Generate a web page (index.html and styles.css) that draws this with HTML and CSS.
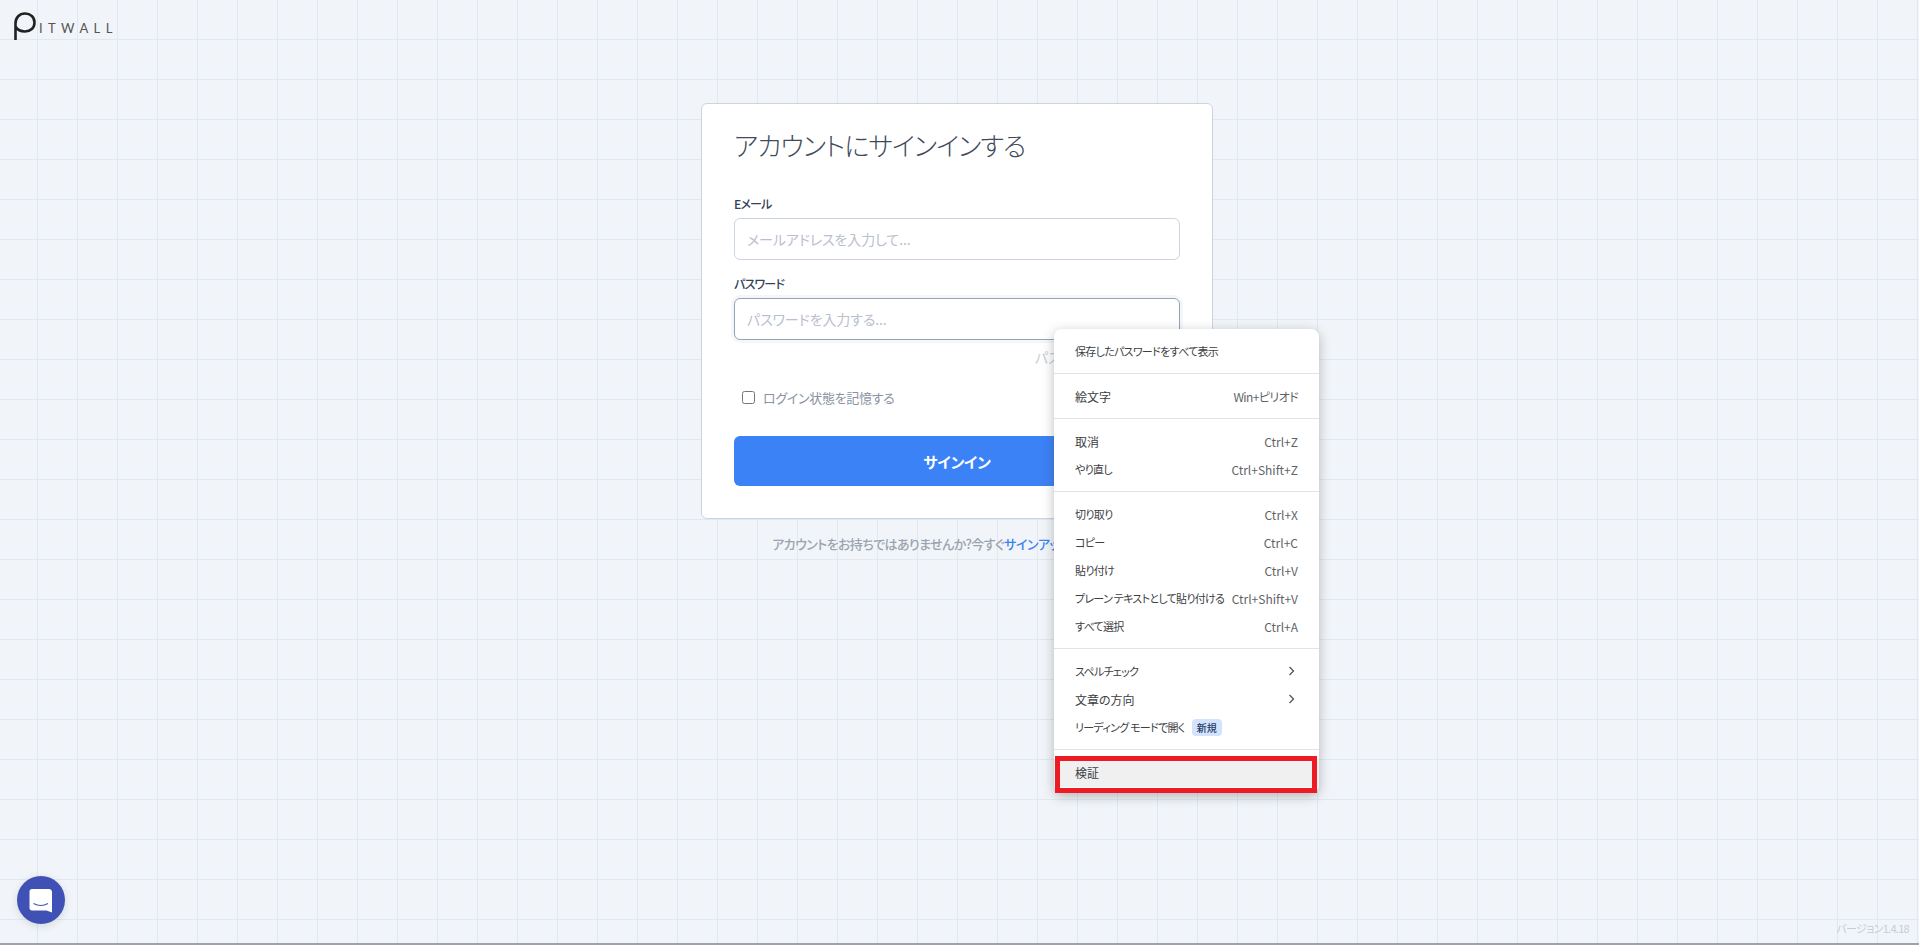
FILE: index.html
```html
<!DOCTYPE html>
<html lang="ja">
<head>
    <meta charset="UTF-8">
    <title>PITWALL</title>
    <link rel="stylesheet" href="styles.css">
</head>
<body>
    <div class="page">
        <header class="logo">
            <svg class="logo-mark" width="24" height="29" viewBox="0 0 24 29">
                <path d="M2.500 28V11.500C2.500 5.500 6.500 1.500 12 1.500C17.500 1.500 21.500 5 21.500 10.500C21.500 16 17.500 19.500 12 19.500C8 19.500 4.500 18 2.500 14.500" fill="none" stroke="#222" stroke-width="2.600"/>
            </svg>
            <span class="logo-text">ITWALL</span>
        </header>

        <main class="content">
            <form class="card">
                <h1 class="card-title">アカウントにサインインする</h1>
                <div class="field">
                    <label class="field-label">Eメール</label>
                    <input class="field-input" type="text" placeholder="メールアドレスを入力して...">
                </div>
                <div class="field">
                    <label class="field-label">パスワード</label>
                    <input class="field-input field-input-focus" type="password" placeholder="パスワードを入力する...">
                </div>
                <div class="forgot">パスワードをお忘れの方</div>
                <label class="remember">
                    <input class="remember-box" type="checkbox">
                    <span>ログイン状態を記憶する</span>
                </label>
                <button class="submit" type="button">サインイン</button>
            </form>
            <p class="signup">アカウントをお持ちではありませんか?今すぐ<a class="signup-link">サインアップしてください。</a></p>
        </main>

        <div class="version">バージョン1.4.18</div>

        <button class="chat" type="button">
            <svg width="24" height="25" viewBox="0 0 24 25">
                <path d="M3 1H20C21.500 1 23 2.300 23 4V24.500L17.500 22.500H3C1.500 22.500 0.500 21.300 0.500 20V3.500C0.500 2 1.500 1 3 1Z" fill="#fff"/>
                <path d="M4.500 15.500C9 18 14.500 18 19 15.500" fill="none" stroke="#3f51b5" stroke-width="1.200"/>
            </svg>
        </button>

        <ul class="menu">
            <li class="menu-row menu-kana"><span>保存したパスワードをすべて表示</span></li>
            <li class="menu-sep"></li>
            <li class="menu-row"><span>絵文字</span><span class="menu-key menu-key-tight">Win+ピリオド</span></li>
            <li class="menu-sep"></li>
            <li class="menu-row"><span>取消</span><span class="menu-key">Ctrl+Z</span></li>
            <li class="menu-row menu-kana"><span>やり直し</span><span class="menu-key">Ctrl+Shift+Z</span></li>
            <li class="menu-sep"></li>
            <li class="menu-row menu-kana"><span>切り取り</span><span class="menu-key">Ctrl+X</span></li>
            <li class="menu-row menu-kana"><span>コピー</span><span class="menu-key">Ctrl+C</span></li>
            <li class="menu-row menu-kana"><span>貼り付け</span><span class="menu-key">Ctrl+V</span></li>
            <li class="menu-row menu-kana"><span>プレーン テキストとして貼り付ける</span><span class="menu-key">Ctrl+Shift+V</span></li>
            <li class="menu-row menu-kana"><span>すべて選択</span><span class="menu-key">Ctrl+A</span></li>
            <li class="menu-sep"></li>
            <li class="menu-row menu-kana"><span>スペルチェック</span>
                <svg class="menu-arrow" width="7" height="10" viewBox="0 0 7 10"><path d="M1.500 1L5.500 5L1.500 9" fill="none" stroke="#555" stroke-width="1.300"/></svg>
            </li>
            <li class="menu-row"><span>文章の方向</span>
                <svg class="menu-arrow" width="7" height="10" viewBox="0 0 7 10"><path d="M1.500 1L5.500 5L1.500 9" fill="none" stroke="#555" stroke-width="1.300"/></svg>
            </li>
            <li class="menu-row menu-kana menu-row-start"><span>リーディング モードで開く</span><span class="menu-badge">新規</span></li>
            <li class="menu-sep"></li>
            <li class="menu-row menu-row-hover"><span>検証</span></li>
            <li class="menu-mark"></li>
        </ul>
    </div>
</body>
</html>
```

FILE: styles.css
```css
* {
    box-sizing: border-box;
}
body {
    margin: 0;
    font-family: "Noto Sans CJK JP", "Noto Sans", sans-serif;
    font-feature-settings: "palt";
    color: #334155;
}
.page {
    position: relative;
    height: 100vh;
    overflow: hidden;
    background-color: #f1f5f9;
    background-image:
        linear-gradient(to right, #e2e8f0 1px, transparent 1px),
        linear-gradient(to bottom, #e2e8f0 1px, transparent 1px);
    background-size: 40px 40px;
    background-position: -3px -1px;
    border-bottom: 2px solid #9ca3af;
}
.logo {
    display: flex;
    height: 103px;
    padding: 12px 0 0 13px;
}
.logo-mark {
    flex: none;
}
.logo-text {
    margin: 9px 0 0 2px;
    font-family: Lato, sans-serif;
    font-size: 13px;
    line-height: 15px;
    letter-spacing: 5.400px;
    color: #555;
}
.content {
    display: flex;
    flex-direction: column;
    align-items: center;
    padding-right: 5px;
}
.card {
    width: 512px;
    height: 416px;
    padding: 23px 32px 0;
    background: #fff;
    border: 1px solid #cbd5e1;
    border-radius: 6px;
}
.card-title {
    margin: 0 0 32px;
    font-size: 26px;
    line-height: 36px;
    font-weight: 300;
    letter-spacing: -0.900px;
    color: #3f4a5c;
}
.field {
    margin-bottom: 15px;
}
.field-label {
    display: block;
    margin-bottom: 5px;
    font-size: 12px;
    line-height: 18px;
    font-weight: 500;
    letter-spacing: -0.800px;
    color: #334155;
}
.field-input {
    display: block;
    width: 100%;
    height: 42px;
    padding: 0 12px;
    font-family: inherit;
    font-feature-settings: inherit;
    font-size: 14px;
    letter-spacing: -0.100px;
    background: #fff;
    border: 1px solid #cbd5e1;
    border-radius: 6px;
    outline: none;
}
.field-input::placeholder {
    color: #b9c0cd;
}
.field-input-focus {
    border-color: #94a3b8;
    box-shadow: 0 0 0 3px #f4f6fa;
}
.forgot {
    margin-top: -8px;
    font-size: 14px;
    line-height: 20px;
    white-space: nowrap;
    text-align: right;
    color: #c8ccd4;
}
.remember {
    display: flex;
    align-items: center;
    gap: 8px;
    margin: 20px 0 29px 8px;
    height: 20px;
    font-size: 13px;
    letter-spacing: -0.300px;
    color: #8a93a3;
}
.remember-box {
    width: 13px;
    height: 13px;
    margin: 0;
}
.submit {
    display: block;
    width: 100%;
    height: 50px;
    border: none;
    border-radius: 6px;
    background: #3b82f6;
    color: #fff;
    font-family: inherit;
    font-feature-settings: inherit;
    font-size: 15px;
    letter-spacing: -0.300px;
    font-weight: 700;
}
.signup {
    margin: 15px 0 0;
    font-size: 13px;
    line-height: 20px;
    font-weight: 500;
    letter-spacing: -0.600px;
    color: #9ca3af;
}
.signup-link {
    letter-spacing: -0.500px;
    color: #3b82f6;
}
.version {
    position: absolute;
    right: 10px;
    bottom: 7px;
    font-size: 11px;
    line-height: 16px;
    letter-spacing: -0.700px;
    color: #c5cbd8;
}
.chat {
    position: absolute;
    left: 17px;
    bottom: 19px;
    display: flex;
    align-items: center;
    justify-content: center;
    width: 48px;
    height: 48px;
    padding: 0;
    border: none;
    border-radius: 50%;
    background: #3f51b5;
    box-shadow: 0 2px 8px rgba(0, 0, 0, 0.12);
}
.menu {
    position: absolute;
    left: 1054px;
    top: 329px;
    width: 265px;
    height: 464px;
    margin: 0;
    padding: 9px 0 0;
    list-style: none;
    background: #fff;
    border-radius: 8px;
    box-shadow: 0 3px 12px rgba(60, 64, 67, 0.35);
    font-size: 12px;
    color: #3c4043;
}
.menu-row {
    display: flex;
    align-items: center;
    justify-content: space-between;
    height: 28px;
    padding: 0 21px 2px;
    white-space: nowrap;
}
.menu-row-start {
    justify-content: flex-start;
    gap: 7px;
}
.menu-row-hover {
    background: #f0f0f0;
}
.menu-kana span:first-child {
    font-size: 11px;
    letter-spacing: -0.700px;
}
.menu-key {
    color: #5f6368;
}
.menu-key-tight {
    letter-spacing: -0.600px;
}
.menu-arrow {
    margin-right: 3px;
}
.menu-badge {
    padding: 0 5px;
    font-size: 10px;
    line-height: 17px;
    font-weight: 500;
    color: #1f3a63;
    background: #d3e3fd;
    border-radius: 4px;
}
.menu-sep {
    height: 1px;
    margin: 7px 0 9px;
    background: #e3e3e3;
}
.menu-mark {
    position: absolute;
    left: 1px;
    right: 2px;
    bottom: 0;
    height: 37px;
    border: 5px solid #ed1c24;
}
```
